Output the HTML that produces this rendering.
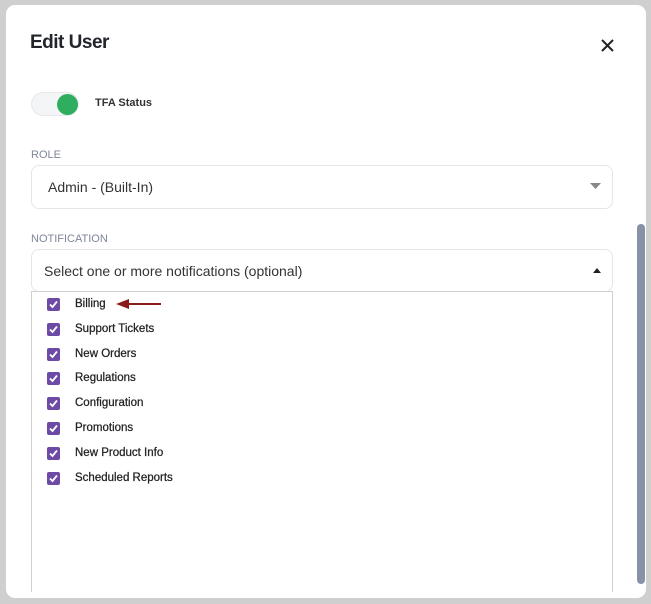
<!DOCTYPE html>
<html><head><style>
body{margin:0;width:651px;height:604px;background:#cfcfcf;font-family:"Liberation Sans",sans-serif;position:relative;overflow:hidden}
.card{position:absolute;left:6px;top:5px;width:640px;height:593px;background:#fff;border-radius:9px}
.a{position:absolute}
.box{position:absolute;border:1px solid #e6e6e6;border-radius:8px;background:#fff}
.item{position:absolute;left:47px;font-size:11.5px;color:#222;height:14px;line-height:14px;-webkit-text-stroke:0.25px #222}
.cb{position:absolute;left:47px;width:13px;height:13px;background:#6c4aa5;border-radius:2px}
.cb svg{position:absolute;left:1px;top:1px}
</style></head><body>
<div class="card"></div>
<div class="a" style="left:30px;top:32px;font-size:19px;font-weight:bold;color:#22252c;letter-spacing:-0.5px">Edit User</div>
<svg class="a" style="left:601px;top:39px" width="13" height="13"><path d="M1 1L12 12M12 1L1 12" stroke="#222" stroke-width="2"/></svg>
<div class="a" style="left:31px;top:92px;width:48px;height:24px;border-radius:12px;background:#f4f5f7;border:1px solid #e6e8ec;box-sizing:border-box"></div>
<div class="a" style="left:57px;top:94px;width:21px;height:21px;border-radius:50%;background:#2fae5f"></div>
<div class="a" style="left:95px;top:97px;font-size:11px;font-weight:bold;color:#333">TFA Status</div>
<div class="a" style="left:31px;top:149px;font-size:11px;color:#7e8799">ROLE</div>
<div class="box" style="left:31px;top:165px;width:580px;height:42px"></div>
<div class="a" style="left:48px;top:179px;font-size:14px;color:#333">Admin - (Built-In)</div>
<svg class="a" style="left:590px;top:183px" width="11" height="6"><path d="M0 0H11L5.5 6Z" fill="#888"/></svg>
<div class="a" style="left:31px;top:233px;font-size:11px;color:#7e8799">NOTIFICATION</div>
<div class="box" style="left:31px;top:249px;width:580px;height:41px"></div>
<div class="a" style="left:44px;top:263px;font-size:14px;color:#333">Select one or more notifications (optional)</div>
<svg class="a" style="left:593px;top:268px" width="8" height="5"><path d="M0 5H8L4 0Z" fill="#222"/></svg>
<div class="a" style="left:31px;top:291px;width:580px;height:300px;border:1px solid #d0d0d0;border-bottom:none;background:#fff"></div>
<div class="a" style="left:637px;top:224px;width:8px;height:360px;border-radius:4px;background:#8892a6"></div>
<svg class="a" style="left:116px;top:299px" width="46" height="10"><path d="M12 5H45" stroke="#8b1a1a" stroke-width="2"/><path d="M0 5L13 0V10Z" fill="#8b1a1a"/></svg>
<div id="list"></div>
<script>
var n=["Billing","Support Tickets","New Orders","Regulations","Configuration","Promotions","New Product Info","Scheduled Reports"],h="";
n.forEach(function(t,i){var y=297+i*24.8;
h+='<div class="cb" style="top:'+(y+1)+'px"><svg width="11" height="11"><path d="M2 5.5L4.5 8L9 2.5" stroke="#fff" stroke-width="1.8" fill="none"/></svg></div><div class="item" style="left:75px;top:'+y+'px">'+t+'</div>';});
document.getElementById("list").innerHTML=h;
</script>
</body></html>
